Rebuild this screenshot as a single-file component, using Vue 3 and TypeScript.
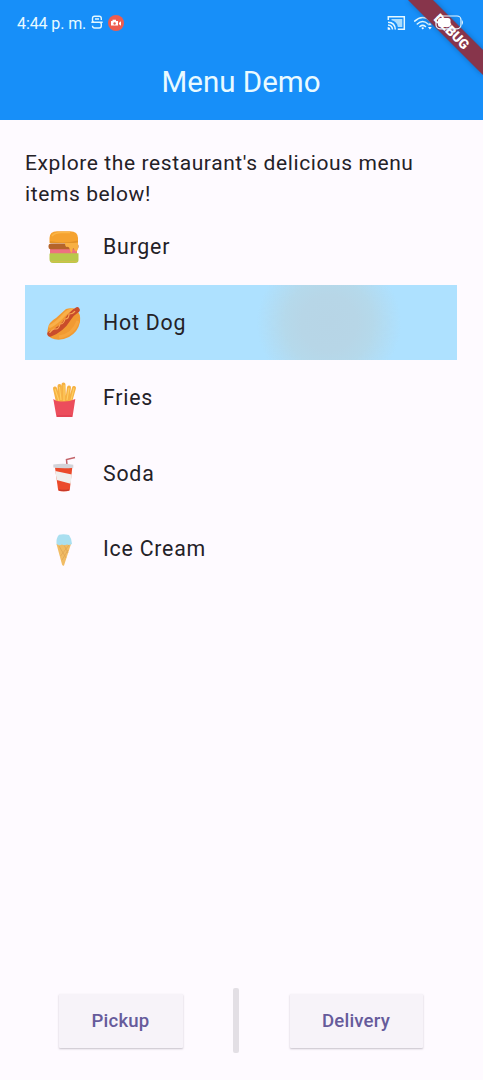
<script setup lang="ts">
import { ref } from 'vue'

interface MenuItem {
  id: string
  name: string
}

const items: MenuItem[] = [
  { id: 'burger', name: 'Burger' },
  { id: 'hotdog', name: 'Hot Dog' },
  { id: 'fries', name: 'Fries' },
  { id: 'soda', name: 'Soda' },
  { id: 'icecream', name: 'Ice Cream' },
]
const selected = ref('hotdog')
</script>

<template>
  <div class="screen">
    <header class="appbar">
      <div class="status">
        <span class="time">4:44 p. m.</span>
        <svg class="s-icon" width="12" height="15" viewBox="0 0 12 15">
          <path d="M10.3 5V3.4Q10.3 1.3 8.2 1.3H3.6Q1.5 1.3 1.5 3.4V5.2Q1.5 7.2 3.6 7.2H8.2Q10.3 7.2 10.3 9.3V10.8Q10.3 13 8.2 13H3.6Q1.5 13 1.5 10.8M.3 7.2H11.7M4 4H8" />
        </svg>
        <svg class="rec" width="16" height="16" viewBox="0 0 16 16">
          <circle cx="8" cy="8" r="8" fill="#ee5c4e" />
          <path d="M3 6H10V10.6H3zM11 7.8L13 6.3V10.7L11 9.3zM4.5 4.8H8V6H4.5z" fill="#fff" />
          <circle cx="6.6" cy="8.5" r="1.2" fill="#ee5c4e" />
        </svg>
        <svg class="signals" width="80" height="20" viewBox="0 0 80 20">
          <g fill="none" stroke="#e4f8ff" stroke-width="1.5">
            <path d="M1.3 7V3.8H17.3V16.2H10.8M1 9.3Q8 9.5 8.3 16.5M1 12Q5.2 12.2 5.5 16.5" />
            <path d="M27.7 8.1Q35.7 .8 43.7 8.1M30.3 11Q35.7 6 41.1 11M32.9 13.5Q35.7 11.2 38.5 13.5" stroke-linecap="round" />
          </g>
          <path d="M4.5 6H15.3V14H10.9Q9.8 8.2 4.5 7.3z" fill="#a9dcfd" />
          <path d="M.7 14Q3.3 14.2 3.5 16.8H.7zM34.3 14.9Q35.7 13.7 37.1 14.9L35.7 16.4zM41 12.3L42.9 9.7 44.8 12.3zM41 14L42.9 16.6 44.8 14z" fill="#fff" />
        </svg>
      </div>
      <h1>Menu Demo</h1>
      <svg class="banner" width="83" height="83" viewBox="0 0 83 83">
        <defs>
          <filter id="shade" x="-20%" y="-20%" width="140%" height="140%"><feGaussianBlur stdDeviation="2.5" /></filter>
        </defs>
        <path d="M8 0H33L83 50V75z" fill="#173f76" opacity=".55" filter="url(#shade)" />
        <path d="M8 0H33L83 50V75z" fill="#87354b" />
        <text transform="translate(51.7 31.5) rotate(45)" text-anchor="middle" y="4.8">DEBUG</text>
        <rect x="36" y="16" width="25" height="12.8" rx="4" fill="none" stroke="#eaf8ff" stroke-width="1.2" />
        <path d="M62 20Q64 22.4 62 25z" fill="#eaf8ff" />
        <rect x="38" y="18" width="12.5" height="9" rx="2.5" fill="#fff" />
      </svg>
    </header>

    <main>
      <p class="intro">Explore the restaurant's delicious menu items below!</p>
      <ul>
        <li v-for="item in items" :key="item.id" :class="{ active: item.id === selected }" @click="selected = item.id">
          <svg v-if="item.id === 'burger'" class="food" viewBox="0 0 60 54">
            <path d="M14.5 23V18Q14.5 11.5 22 11.2H35Q43 11.5 43 18V23z" fill="#f5a22f" />
            <path d="M17 16Q20 12.5 27 12.6H35" fill="none" stroke="#fbb647" stroke-width="1.5" />
            <path d="M15 21Q28 24 43 20.5V22Q39 24 15 23z" fill="#e39328" />
            <rect x="15" y="28" width="27" height="6" fill="#ee7180" />
            <rect x="13.5" y="23.5" width="30" height="5.8" rx="2.5" fill="#b5642a" />
            <path d="M30 23H43V29Q41 34 39 29Q38 27 37.5 30Q36.5 36 35 30Q34 26 32 27Q30 27 30 23z" fill="#f8b043" />
            <path d="M15 33.2H43.5V40Q43.5 43 40 43H18Q14.5 43 14.5 39V34z" fill="#b8c84b" />
            <path d="M16 41.5H42" stroke="#d0c04b" stroke-width="1.3" />
          </svg>
          <svg v-else-if="item.id === 'hotdog'" class="food" viewBox="0 0 60 54">
            <path d="M13 33Q14 27 21 23L31 14Q37 12 41 15Q46 18 45 27Q43 37 34 42Q24 47 16 43Q11 39 13 33z" fill="#f19a32" />
            <path d="M14 32Q22 28 28 21Q34 14 39 15" fill="none" stroke="#f9b04a" stroke-width="3" />
            <path d="M15 39Q27 34 33 24Q37 18 42 15" fill="none" stroke="#c94c2b" stroke-width="5.5" stroke-linecap="round" />
            <path d="M14.5 38Q18 33 21 34Q24 34 25 29Q29 29 30 24Q34 24 34 19Q38 19 40 16" fill="none" stroke="#f9a850" stroke-width="1.2" />
            <path d="M24 42Q38 40 43 26" fill="none" stroke="#f6a53e" stroke-width="3" />
          </svg>
          <svg v-else-if="item.id === 'fries'" class="food" viewBox="0 0 60 54">
            <g fill="none" stroke="#f6b143" stroke-width="4" stroke-linecap="round">
              <path d="M20 17.5L23 31M24.5 15L25 31M28.5 13.5L29 31M34 16.5L32 31M39 17L35 31" />
            </g>
            <path d="M20 18L24 30M24.5 16L26 29M29 14V30M34 17L32 29M39 17L36 29" fill="none" stroke="#ffcf63" stroke-width="1.1" />
            <path d="M18.3 28Q22 31 27 30.5Q34 31 40.3 28L37.5 46H21.5z" fill="#ec4d5c" />
            <path d="M22 45H37" stroke="#d83a4e" stroke-width="1" />
          </svg>
          <svg v-else-if="item.id === 'soda'" class="food" viewBox="0 0 60 54">
            <path d="M32 19L31.5 13.5L40 11.5" fill="none" stroke="#c3636a" stroke-width="1.5" />
            <path d="M20 21.5L37.3 21.5L34.7 44.5Q28.5 46.5 23.2 44.5z" fill="#eb4a2b" />
            <path d="M20.3 25L36.8 28.5L35.7 37.7L21.7 34z" fill="#f0efed" />
            <path d="M18.3 18.5Q28 16.8 38.3 18.7V21.8Q28 23 18.3 21.5z" fill="#d2d3d9" />
            <path d="M24 43.8Q29 45 34 43.8" fill="none" stroke="#c5392a" stroke-width="1.2" />
          </svg>
          <svg v-else class="food" viewBox="0 0 60 54">
            <path d="M21.5 22H36L29 43.5Q28 44.5 27 42.5z" fill="#f1bc65" />
            <path d="M24 24L31 36M29 23L33 31M34 23L25.5 34M33 28L27 38" stroke="#dfa655" stroke-width=".8" />
            <path d="M21.5 22Q21 16 24 12.8Q28.5 11.5 34 13Q37 17 37 22Q34 23.5 32 22.5Q29 24 27 22.5Q24 24 21.5 22z" fill="#aadff0" />
          </svg>
          <span>{{ item.name }}</span>
        </li>
      </ul>
    </main>

    <footer>
      <button class="pickup">Pickup</button>
      <i class="divider"></i>
      <button class="delivery">Delivery</button>
    </footer>
  </div>
</template>

<style>
body {
  margin: 0;
}
</style>

<style scoped>
.screen {
  box-sizing: border-box;
  width: 483px;
  height: 1080px;
  display: flex;
  flex-direction: column;
  overflow: hidden;
  background: #fefaff;
  font-family: Roboto, sans-serif;
  color: #242127;
}
.appbar {
  position: relative;
  height: 120px;
  flex: none;
  background: #178ff9;
  color: #e9faff;
}
.status {
  height: 45px;
  padding: 0 16px 0 17px;
  display: flex;
  align-items: center;
}
.time {
  width: 74px;
  padding-top: 1px;
  font-size: 16px;
  letter-spacing: -0.1px;
  white-space: nowrap;
}
.s-icon {
  margin-right: 5px;
  fill: none;
  stroke: #e4f8ff;
  stroke-width: 1.4;
}
.signals {
  margin-left: auto;
}
h1 {
  margin: 18px 0 0;
  padding-right: 1px;
  text-align: center;
  font-size: 29.5px;
  line-height: 38px;
  font-weight: 400;
}
.banner {
  position: absolute;
  top: 0;
  right: 0;
}
.banner text {
  font: 900 13.6px Roboto, sans-serif;
  fill: #fff;
}
main {
  flex: 1;
  padding: 28px 26px 0 25px;
}
.intro {
  margin: 0 0 -1px;
  font-size: 21px;
  line-height: 31px;
  letter-spacing: 0.6px;
}
ul {
  margin: 0;
  padding: 0;
  list-style: none;
}
li {
  height: 75.5px;
  display: flex;
  align-items: center;
  font-size: 21.3px;
  letter-spacing: 0.78px;
}
li.active {
  background: radial-gradient(circle at 304px 38px, #b7d5e6 0, #b7d6e7 28px, #b5d9eb 44px, rgba(174, 225, 255, 0) 72px), #aee1ff;
}
.food {
  width: 60px;
  height: 54px;
  margin: 0 8px 0 10px;
}
footer {
  display: flex;
  height: 92px;
  padding: 0 60px 0 59px;
  box-sizing: border-box;
  justify-content: space-between;
}
button {
  height: 54px;
  margin-top: 6px;
  padding: 0 1px 0 0;
  border: 0;
  border-radius: 1px;
  background: #f7f3f9;
  box-shadow: 0 1px 2px rgba(50, 40, 60, 0.28);
  color: #665b9b;
  font: 500 18.6px Roboto, sans-serif;
  letter-spacing: 0.18px;
}
.pickup {
  width: 124px;
}
.delivery {
  width: 133px;
}
.divider {
  width: 6px;
  height: 65px;
  margin-right: 2px;
  border-radius: 2px;
  background: #e3dfe5;
}
</style>
